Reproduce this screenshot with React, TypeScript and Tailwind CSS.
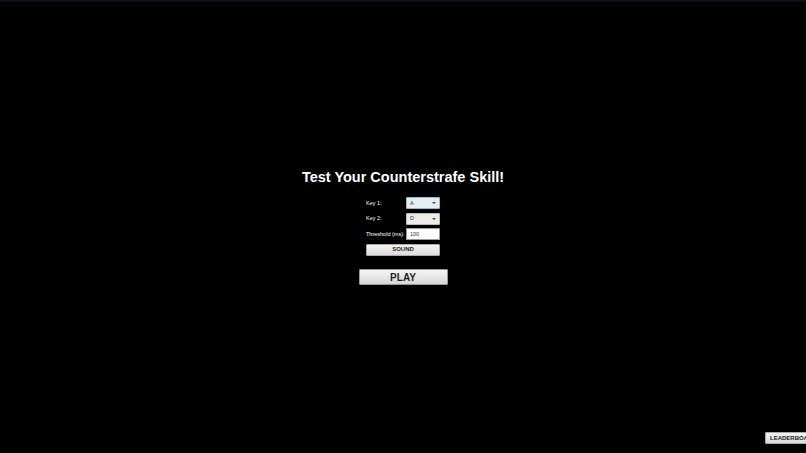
export default function App() {
  return (
    <div className="relative h-[453px] w-[806px] overflow-hidden bg-black font-['Liberation_Sans',Arial,sans-serif]">
      <div className="h-[2px] w-full bg-[#0f0f17]" />
      <div className="flex flex-col items-center pt-[166px]">
        <h1 className="text-[14.5px] font-bold leading-[18px] text-white">Test Your Counterstrafe Skill!</h1>
        <div className="mt-[11px] flex w-[74px] flex-col gap-[3.5px] text-[5.5px] text-white">
          <div className="flex h-[12px] items-center justify-between">
            <span>Key 1:</span>
            <div className="flex h-[12px] w-[34px] items-center justify-between rounded-[1px] border border-[#7ec3d6] bg-[#e8eef0] px-[3px] text-[#333]">
              <span>A</span>
              <span className="h-0 w-0 border-x-[2px] border-t-[2px] border-x-transparent border-t-[#444]" />
            </div>
          </div>
          <div className="flex h-[12px] items-center justify-between">
            <span>Key 2:</span>
            <div className="flex h-[12px] w-[34px] items-center justify-between rounded-[1px] border border-[#bbb] bg-[#ececec] px-[3px] text-[#333]">
              <span>D</span>
              <span className="h-0 w-0 border-x-[2px] border-t-[2px] border-x-transparent border-t-[#444]" />
            </div>
          </div>
          <div className="flex h-[12px] items-center justify-between">
            <span>Threshold (ms):</span>
            <div className="flex h-[12px] w-[34px] items-center border border-[#999] bg-white px-[3px] text-[#333]">100</div>
          </div>
          <div className="flex h-[12px] items-center justify-center rounded-[1px] border border-[#aaa] bg-gradient-to-b from-[#f4f4f4] to-[#dcdcdc] text-[6px] font-bold text-[#222]">
            SOUND
          </div>
        </div>
        <div className="mt-[13.5px] flex h-[16px] w-[89px] items-center justify-center rounded-[1px] border border-[#999] bg-gradient-to-b from-[#f6f6f6] to-[#d6d6d6] text-[10px] font-bold text-[#222]">
          PLAY
        </div>
      </div>
      <div className="absolute left-[765px] top-[432px] flex h-[12px] items-center rounded-[1px] border border-[#aaa] bg-gradient-to-b from-[#f4f4f4] to-[#dcdcdc] px-[4px] text-[6px] font-bold whitespace-nowrap text-[#222]">
        LEADERBOARD
      </div>
    </div>
  );
}
